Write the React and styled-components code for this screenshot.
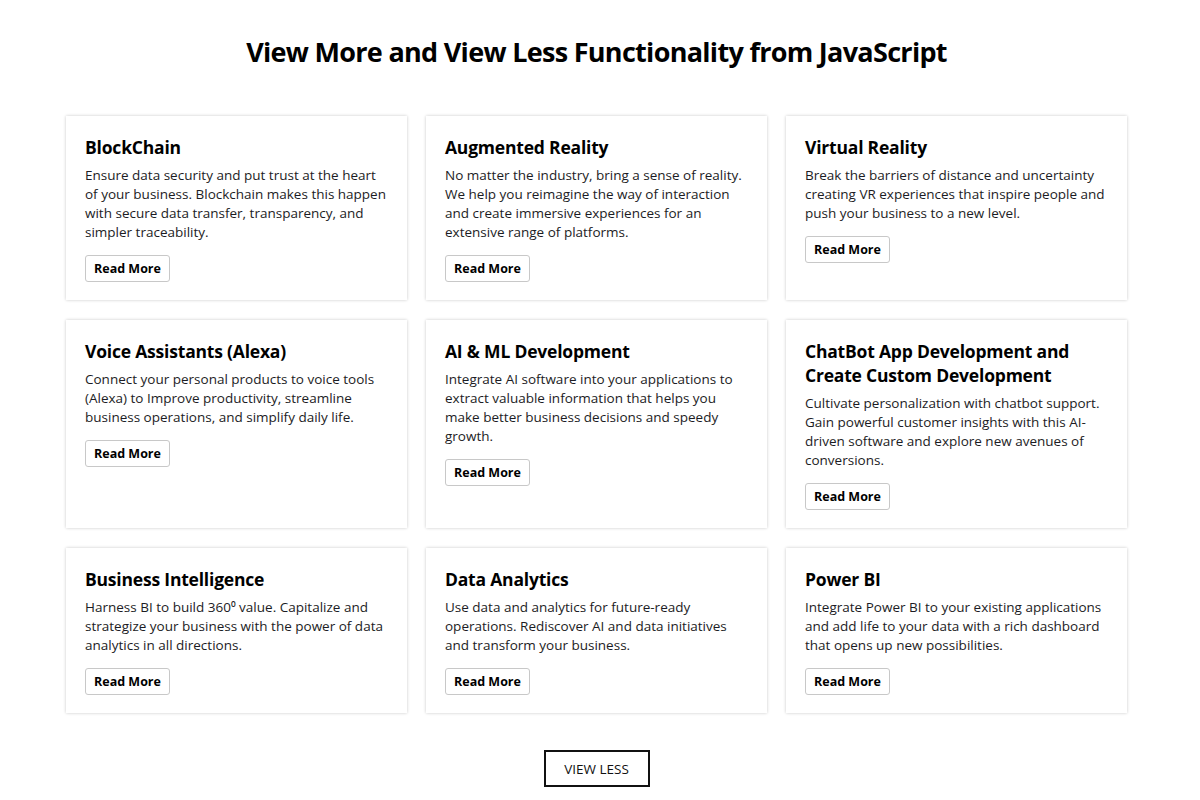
import React, { useState } from "react";
import styled, { createGlobalStyle } from "styled-components";

const GlobalStyle = createGlobalStyle`
  * { box-sizing: border-box; }
  body {
    margin: 0;
    padding-right: 7px;
    background: #fff;
    font-family: "Open Sans", "Noto Sans", sans-serif;
    color: #111;
  }
`;

const services = [
  {
    title: "BlockChain",
    text: "Ensure data security and put trust at the heart of your business. Blockchain makes this happen with secure data transfer, transparency, and simpler traceability."
  },
  {
    title: "Augmented Reality",
    text: "No matter the industry, bring a sense of reality. We help you reimagine the way of interaction and create immersive experiences for an extensive range of platforms."
  },
  {
    title: "Virtual Reality",
    text: "Break the barriers of distance and uncertainty creating VR experiences that inspire people and push your business to a new level."
  },
  {
    title: "Voice Assistants (Alexa)",
    text: "Connect your personal products to voice tools (Alexa) to Improve productivity, streamline business operations, and simplify daily life."
  },
  {
    title: "AI & ML Development",
    text: "Integrate AI software into your applications to extract valuable information that helps you make better business decisions and speedy growth."
  },
  {
    title: "ChatBot App Development and Create Custom Development",
    text: "Cultivate personalization with chatbot support. Gain powerful customer insights with this AI-driven software and explore new avenues of conversions."
  },
  {
    title: "Business Intelligence",
    text: "Harness BI to build 360⁰ value. Capitalize and strategize your business with the power of data analytics in all directions."
  },
  {
    title: "Data Analytics",
    text: "Use data and analytics for future-ready operations. Rediscover AI and data initiatives and transform your business."
  },
  {
    title: "Power BI",
    text: "Integrate Power BI to your existing applications and add life to your data with a rich dashboard that opens up new possibilities."
  }
];

const Page = styled.main`
  width: 1061px;
  margin: 0 auto;
  padding: 34px 0 12px;
  display: flex;
  flex-direction: column;
  align-items: center;
`;

const Heading = styled.h1`
  margin: 0 0 46px;
  font-size: 27px;
  line-height: 36px;
  font-weight: 700;
  letter-spacing: -0.7px;
  color: #000;
`;

const Grid = styled.section`
  width: 100%;
  display: grid;
  grid-template-columns: repeat(3, 1fr);
  gap: 20px 19px;
`;

const Card = styled.article`
  background: #fff;
  padding: 19px 19px 18px;
  box-shadow: 0 0 3px rgba(0, 0, 0, 0.22);
  display: flex;
  flex-direction: column;
  align-items: flex-start;
`;

const CardTitle = styled.h2`
  margin: 0 0 7px;
  font-size: 17.5px;
  line-height: 24px;
  font-weight: 700;
  letter-spacing: -0.2px;
  color: #000;
`;

const CardText = styled.p`
  margin: 0 0 13px;
  font-size: 13.5px;
  line-height: 19px;
  letter-spacing: 0;
  color: #1c1c24;
`;

const ReadMore = styled.button`
  font-family: inherit;
  font-size: 12.5px;
  font-weight: 700;
  color: #000;
  background: #fff;
  border: 1px solid #c8c8c8;
  border-radius: 3px;
  padding: 0 8px;
  height: 27px;
  cursor: pointer;
`;

const ToggleButton = styled.button`
  margin-top: 37px;
  font-family: inherit;
  font-size: 13.5px;
  color: #111;
  background: #fff;
  border: 2px solid #111;
  padding: 0 18px;
  height: 37px;
  width: 106px;
  text-transform: uppercase;
  cursor: pointer;
`;

export default function App() {
  const [expanded, setExpanded] = useState(true);
  const shown = expanded ? services : services.slice(0, 6);

  return (
    <>
      <GlobalStyle />
      <Page>
        <Heading>View More and View Less Functionality from JavaScript</Heading>
        <Grid>
          {shown.map((item, index) => (
            <Card key={index}>
              <CardTitle>{item.title}</CardTitle>
              <CardText>{item.text}</CardText>
              <ReadMore>Read More</ReadMore>
            </Card>
          ))}
        </Grid>
        <ToggleButton onClick={() => setExpanded(!expanded)}>
          {expanded ? "View Less" : "View More"}
        </ToggleButton>
      </Page>
    </>
  );
}
